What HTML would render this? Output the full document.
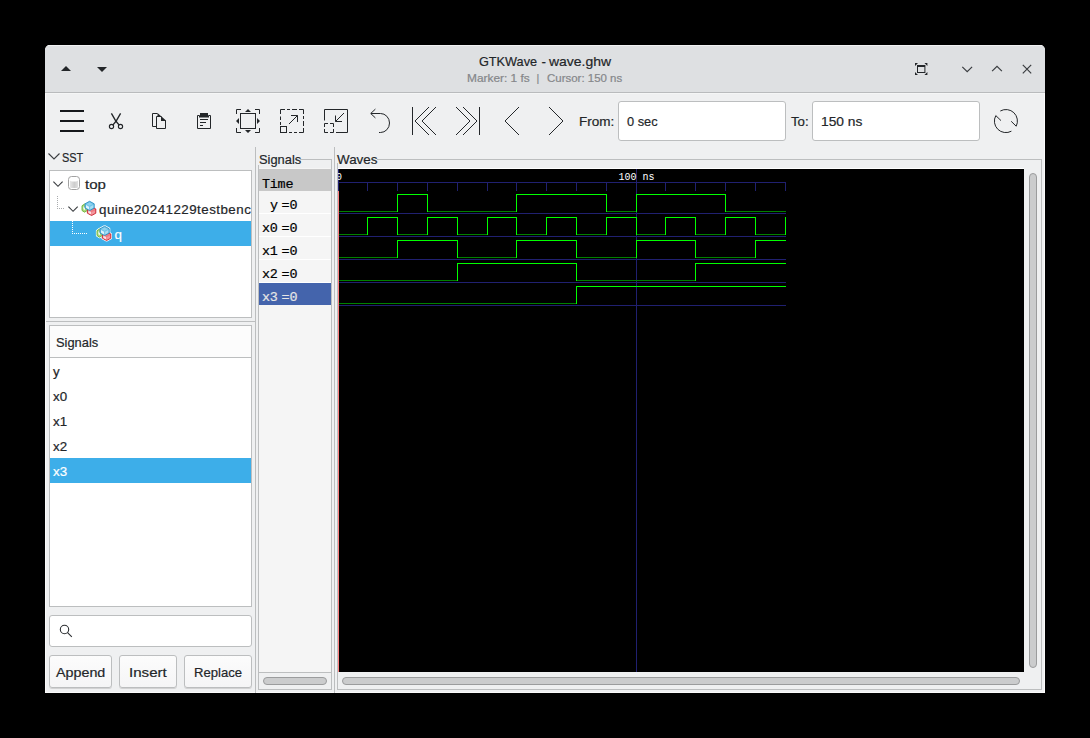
<!DOCTYPE html>
<html><head><meta charset="utf-8">
<style>
*{box-sizing:border-box;margin:0;padding:0}
html,body{width:1090px;height:738px;background:#000;overflow:hidden}
body{position:relative;font-family:"Liberation Sans",sans-serif;font-size:13.33px;color:#232629}
.a{position:absolute}
.t{-webkit-text-stroke:.2px;position:absolute;white-space:nowrap;line-height:25px;height:25px}
.mono{font-family:"Liberation Mono",monospace}
svg{position:absolute;overflow:visible}
#win{left:45px;top:45px;width:1000px;height:648px;background:#eff0f1;border-radius:5px 5px 0 0;overflow:hidden}
#tb{left:0;top:0;width:1000px;height:47px;background:#dee0e2;border-top:1px solid #f1f2f3}
#tbl{left:0;top:47px;width:1000px;height:1px;background:#b9bbbd}
.box{position:absolute;background:#fff;border:1px solid #bcbebf}
.entry{position:absolute;background:#fff;border:1px solid #bcbebf;border-radius:3px}
.btn{position:absolute;border:1px solid #bcbebf;border-radius:3px;background:linear-gradient(#fcfcfc,#f5f5f6);box-shadow:0 1px 0 rgba(0,0,0,.12)}
.sel{position:absolute;background:#3daee9}
.ln{position:absolute;background:#bcbebf}
.sb{position:absolute;background:#cbcccd;border:1px solid #9b9c9d;border-radius:4px}
#wv i{position:absolute;display:block}
.sn{font-size:13.4px;letter-spacing:-.24px;line-height:20px;height:20px;color:#000}
.sx{transform-origin:0 0}
.sub{font-size:10.67px;color:#85878a}
</style></head><body>
<div id="win" class="a">
<div class="a" style="left:0;top:48px;width:1000px;height:600px;box-shadow:inset 1px 0 #fafafa,inset -1px 0 #fafafa,inset 0 -1px #fafafa,inset 0 1px #f5f6f6"></div>
<div id="tb" class="a"></div><div id="tbl" class="a"></div>
</div>

<!-- TITLE -->
<div class="t sx" id="t1" style="left:478.75px;top:49px;transform:scaleX(.952)">GTKWave</div>
<div class="t sx" id="t2" style="left:541.4px;top:49px">-</div>
<div class="t sx" id="t3" style="left:548.6px;top:49px;transform:scaleX(1.047)">wave.ghw</div>
<div class="t sx sub" id="s1" style="left:466.8px;top:66px;transform:scaleX(1.115)">Marker: 1 fs</div>
<div class="t sx sub" id="s2" style="left:536.4px;top:66px">|</div>
<div class="t sx sub" id="s3" style="left:546.9px;top:66px;transform:scaleX(1.076)">Cursor: 150 ns</div>

<!-- LEFT PANEL -->
<div class="t" id="sst" style="left:61.7px;top:145px;transform:scaleX(0.82);transform-origin:0 0">SST</div>
<div class="box" style="left:49px;top:170px;width:203px;height:148px"></div>
<div class="sel" style="left:50px;top:221px;width:201px;height:25px"></div>
<div class="t" id="ttop" style="left:84.5px;top:172px;transform:scaleX(1.128);transform-origin:0 0">top</div>
<div class="t" id="tquine" style="letter-spacing:.475px;left:99px;top:197px;width:152px;overflow:hidden">quine20241229testbench</div>
<div class="t" id="tq" style="left:114.6px;top:222px;transform:scaleX(1);transform-origin:0 0;color:#fff">q</div>

<div class="ln" style="left:46px;top:321px;width:209px;height:1px"></div>
<div class="box" style="left:49px;top:325px;width:203px;height:282px"></div>
<div class="a" style="left:50px;top:326px;width:201px;height:31px;background:#fcfcfc"></div>
<div class="ln" style="left:50px;top:357px;width:201px;height:1px"></div>
<div class="t" id="lsig" style="left:56.3px;top:330px;transform:scaleX(.965);transform-origin:0 0">Signals</div>
<div class="sel" style="left:50px;top:458px;width:201px;height:25px"></div>
<div class="t" style="left:53px;top:359px">y</div>
<div class="t" style="left:53px;top:384px">x0</div>
<div class="t" style="left:53px;top:409px">x1</div>
<div class="t" style="left:53px;top:434px">x2</div>
<div class="t" style="left:53px;top:459px;color:#fff">x3</div>

<div class="entry" style="left:49px;top:615px;width:203px;height:32px"></div>
<div class="btn" style="left:49px;top:655px;width:63px;height:33px"></div>
<div class="btn" style="left:119px;top:655px;width:58px;height:33px"></div>
<div class="btn" style="left:184px;top:655px;width:68px;height:33px"></div>
<div class="t" id="bapp" style="left:56.2px;top:660px;transform:scaleX(1.073);transform-origin:0 0">Append</div>
<div class="t" id="bins" style="left:129.1px;top:660px;transform:scaleX(1.133);transform-origin:0 0">Insert</div>
<div class="t" id="brep" style="left:194.2px;top:660px;transform:scaleX(0.983);transform-origin:0 0">Replace</div>

<!-- pane separators -->
<div class="ln" style="left:255px;top:147px;width:1px;height:546px"></div>
<div class="ln" style="left:334px;top:147px;width:1px;height:546px"></div>

<!-- SIGNALS FRAME -->
<div class="ln" style="left:300px;top:159px;width:32px;height:1px"></div>
<div class="ln" style="left:331px;top:159px;width:1px;height:531px"></div>
<div class="ln" style="left:258px;top:689px;width:74px;height:1px"></div>
<div class="ln" style="left:258px;top:165px;width:1px;height:525px"></div>
<div class="t" id="fsig" style="left:258.5px;top:146px;transform:translateY(.5px) scaleX(.965);transform-origin:0 0">Signals</div>
<div class="a" style="left:259px;top:168px;width:72px;height:504px;background:#f5f5f5"></div>
<div class="a" style="left:259px;top:169px;width:72px;height:22px;background:#c8c8c8"></div>
<div class="ln" style="left:259px;top:672px;width:72px;height:1px"></div>
<div class="sb" style="left:263px;top:677px;width:64px;height:8px"></div>

<!-- WAVES FRAME -->
<div class="ln" style="left:377px;top:159px;width:665px;height:1px"></div>
<div class="ln" style="left:1041px;top:159px;width:1px;height:531px"></div>
<div class="ln" style="left:337px;top:689px;width:705px;height:1px"></div>
<div class="ln" style="left:337px;top:163px;width:1px;height:527px"></div>
<div class="t" id="fwav" style="left:337px;top:146px;transform:translateY(.5px) scaleX(1.005);transform-origin:0 0">Waves</div>
<div class="a" style="left:338px;top:168px;width:686px;height:1px;background:#fff"></div>
<div class="a" id="wave" style="left:338px;top:169px;width:686px;height:503px;background:#000"></div>
<div class="sb" style="left:1029px;top:173px;width:8px;height:495px"></div>
<div class="sb" style="left:342px;top:677px;width:678px;height:8px"></div>

<!-- TOOLBAR ENTRIES -->
<div class="t" id="lfrom" style="left:579px;top:109px;transform:scaleX(1.015);transform-origin:0 0">From:</div>
<div class="entry" style="left:618px;top:101px;width:168px;height:40px"></div>
<div class="t" id="efrom" style="left:627.2px;top:109px;transform:scaleX(0.962);transform-origin:0 0">0 sec</div>
<div class="t" id="lto" style="left:791.1px;top:109px;transform:scaleX(0.994);transform-origin:0 0">To:</div>
<div class="entry" style="left:812px;top:101px;width:168px;height:40px"></div>
<div class="t" id="eto" style="left:820.7px;top:109px;transform:scaleX(1.033);transform-origin:0 0">150 ns</div>

<!-- SIGNAL NAMES PANE -->
<div class="a" style="left:259px;top:213px;width:72px;height:1px;background:#fff"></div>
<div class="a" style="left:259px;top:236px;width:72px;height:1px;background:#fff"></div>
<div class="a" style="left:259px;top:259px;width:72px;height:1px;background:#fff"></div>
<div class="a" style="left:259px;top:282px;width:72px;height:1px;background:#fff"></div>
<div class="a" style="left:259px;top:283px;width:72px;height:22px;background:#4464ac"></div>
<div class="t mono sn" id="stime" style="left:262px;top:175px">Time</div>
<div class="t mono sn" id="sy" style="left:270px;top:196px">y</div><div class="t mono sn" style="left:281.6px;top:196px">=0</div>
<div class="t mono sn" id="sx0" style="left:262px;top:219px">x0</div><div class="t mono sn" style="left:281.6px;top:219px">=0</div>
<div class="t mono sn" style="left:262px;top:242px">x1</div><div class="t mono sn" style="left:281.6px;top:242px">=0</div>
<div class="t mono sn" style="left:262px;top:265px">x2</div><div class="t mono sn" style="left:281.6px;top:265px">=0</div>
<div class="t mono sn" style="left:262px;top:288px;color:#e6e6e6">x3</div><div class="t mono sn" style="left:281.6px;top:288px;color:#e6e6e6">=0</div>

<!-- WAVEFORMS -->
<div id="wv">
<i style="left:338px;top:182px;width:448px;height:1px;background:#202070"></i>
<i style="left:338px;top:169px;width:1px;height:22px;background:#202070"></i>
<i style="left:367px;top:183px;width:1px;height:8px;background:#202070"></i>
<i style="left:397px;top:183px;width:1px;height:8px;background:#202070"></i>
<i style="left:427px;top:183px;width:1px;height:8px;background:#202070"></i>
<i style="left:457px;top:183px;width:1px;height:8px;background:#202070"></i>
<i style="left:487px;top:183px;width:1px;height:8px;background:#202070"></i>
<i style="left:516px;top:183px;width:1px;height:8px;background:#202070"></i>
<i style="left:546px;top:183px;width:1px;height:8px;background:#202070"></i>
<i style="left:576px;top:183px;width:1px;height:8px;background:#202070"></i>
<i style="left:606px;top:183px;width:1px;height:8px;background:#202070"></i>
<i style="left:636px;top:183px;width:1px;height:8px;background:#202070"></i>
<i style="left:665px;top:183px;width:1px;height:8px;background:#202070"></i>
<i style="left:695px;top:183px;width:1px;height:8px;background:#202070"></i>
<i style="left:725px;top:183px;width:1px;height:8px;background:#202070"></i>
<i style="left:755px;top:183px;width:1px;height:8px;background:#202070"></i>
<i style="left:785px;top:183px;width:1px;height:8px;background:#202070"></i>
<i style="left:339px;top:213px;width:447px;height:1px;background:#202070"></i>
<i style="left:339px;top:236px;width:447px;height:1px;background:#202070"></i>
<i style="left:339px;top:259px;width:447px;height:1px;background:#202070"></i>
<i style="left:339px;top:282px;width:447px;height:1px;background:#202070"></i>
<i style="left:339px;top:305px;width:447px;height:1px;background:#202070"></i>
<i style="left:636px;top:169px;width:1px;height:503px;background:#202070"></i>
<i style="left:338px;top:191px;width:1px;height:481px;background:#ff8080"></i>
<i style="left:339px;top:211px;width:59px;height:1px;background:#008000"></i>
<i style="left:397px;top:194px;width:31px;height:1px;background:#00ff00"></i>
<i style="left:397px;top:194px;width:1px;height:18px;background:#00ff00"></i>
<i style="left:427px;top:211px;width:90px;height:1px;background:#008000"></i>
<i style="left:427px;top:194px;width:1px;height:18px;background:#00ff00"></i>
<i style="left:516px;top:194px;width:91px;height:1px;background:#00ff00"></i>
<i style="left:516px;top:194px;width:1px;height:18px;background:#00ff00"></i>
<i style="left:606px;top:211px;width:31px;height:1px;background:#008000"></i>
<i style="left:606px;top:194px;width:1px;height:18px;background:#00ff00"></i>
<i style="left:636px;top:194px;width:90px;height:1px;background:#00ff00"></i>
<i style="left:636px;top:194px;width:1px;height:18px;background:#00ff00"></i>
<i style="left:725px;top:211px;width:61px;height:1px;background:#008000"></i>
<i style="left:725px;top:194px;width:1px;height:18px;background:#00ff00"></i>
<i style="left:339px;top:234px;width:29px;height:1px;background:#008000"></i>
<i style="left:367px;top:217px;width:31px;height:1px;background:#00ff00"></i>
<i style="left:367px;top:217px;width:1px;height:18px;background:#00ff00"></i>
<i style="left:397px;top:234px;width:31px;height:1px;background:#008000"></i>
<i style="left:397px;top:217px;width:1px;height:18px;background:#00ff00"></i>
<i style="left:427px;top:217px;width:31px;height:1px;background:#00ff00"></i>
<i style="left:427px;top:217px;width:1px;height:18px;background:#00ff00"></i>
<i style="left:457px;top:234px;width:31px;height:1px;background:#008000"></i>
<i style="left:457px;top:217px;width:1px;height:18px;background:#00ff00"></i>
<i style="left:487px;top:217px;width:30px;height:1px;background:#00ff00"></i>
<i style="left:487px;top:217px;width:1px;height:18px;background:#00ff00"></i>
<i style="left:516px;top:234px;width:31px;height:1px;background:#008000"></i>
<i style="left:516px;top:217px;width:1px;height:18px;background:#00ff00"></i>
<i style="left:546px;top:217px;width:31px;height:1px;background:#00ff00"></i>
<i style="left:546px;top:217px;width:1px;height:18px;background:#00ff00"></i>
<i style="left:576px;top:234px;width:31px;height:1px;background:#008000"></i>
<i style="left:576px;top:217px;width:1px;height:18px;background:#00ff00"></i>
<i style="left:606px;top:217px;width:31px;height:1px;background:#00ff00"></i>
<i style="left:606px;top:217px;width:1px;height:18px;background:#00ff00"></i>
<i style="left:636px;top:234px;width:30px;height:1px;background:#008000"></i>
<i style="left:636px;top:217px;width:1px;height:18px;background:#00ff00"></i>
<i style="left:665px;top:217px;width:31px;height:1px;background:#00ff00"></i>
<i style="left:665px;top:217px;width:1px;height:18px;background:#00ff00"></i>
<i style="left:695px;top:234px;width:31px;height:1px;background:#008000"></i>
<i style="left:695px;top:217px;width:1px;height:18px;background:#00ff00"></i>
<i style="left:725px;top:217px;width:31px;height:1px;background:#00ff00"></i>
<i style="left:725px;top:217px;width:1px;height:18px;background:#00ff00"></i>
<i style="left:755px;top:234px;width:31px;height:1px;background:#008000"></i>
<i style="left:755px;top:217px;width:1px;height:18px;background:#00ff00"></i>
<i style="left:785px;top:217px;width:1px;height:18px;background:#00ff00"></i>
<i style="left:339px;top:257px;width:59px;height:1px;background:#008000"></i>
<i style="left:397px;top:240px;width:61px;height:1px;background:#00ff00"></i>
<i style="left:397px;top:240px;width:1px;height:18px;background:#00ff00"></i>
<i style="left:457px;top:257px;width:60px;height:1px;background:#008000"></i>
<i style="left:457px;top:240px;width:1px;height:18px;background:#00ff00"></i>
<i style="left:516px;top:240px;width:61px;height:1px;background:#00ff00"></i>
<i style="left:516px;top:240px;width:1px;height:18px;background:#00ff00"></i>
<i style="left:576px;top:257px;width:61px;height:1px;background:#008000"></i>
<i style="left:576px;top:240px;width:1px;height:18px;background:#00ff00"></i>
<i style="left:636px;top:240px;width:60px;height:1px;background:#00ff00"></i>
<i style="left:636px;top:240px;width:1px;height:18px;background:#00ff00"></i>
<i style="left:695px;top:257px;width:61px;height:1px;background:#008000"></i>
<i style="left:695px;top:240px;width:1px;height:18px;background:#00ff00"></i>
<i style="left:755px;top:240px;width:31px;height:1px;background:#00ff00"></i>
<i style="left:755px;top:240px;width:1px;height:18px;background:#00ff00"></i>
<i style="left:339px;top:280px;width:119px;height:1px;background:#008000"></i>
<i style="left:457px;top:263px;width:120px;height:1px;background:#00ff00"></i>
<i style="left:457px;top:263px;width:1px;height:18px;background:#00ff00"></i>
<i style="left:576px;top:280px;width:120px;height:1px;background:#008000"></i>
<i style="left:576px;top:263px;width:1px;height:18px;background:#00ff00"></i>
<i style="left:695px;top:263px;width:91px;height:1px;background:#00ff00"></i>
<i style="left:695px;top:263px;width:1px;height:18px;background:#00ff00"></i>
<i style="left:339px;top:303px;width:238px;height:1px;background:#008000"></i>
<i style="left:576px;top:286px;width:210px;height:1px;background:#00ff00"></i>
<i style="left:576px;top:286px;width:1px;height:18px;background:#00ff00"></i>
</div>
<div class="t mono" id="t0" style="-webkit-text-stroke:0;left:338px;top:171.3px;transform:scaleY(1.08);transform-origin:0 100%;width:4px;overflow:hidden;color:#fff;font-size:10px;line-height:13px;height:13px"><span style="margin-left:-2px">0</span></div>
<div class="t mono" id="t100" style="-webkit-text-stroke:0;left:618.4px;top:171.3px;transform:scaleY(1.08);transform-origin:0 100%;color:#fff;font-size:10px;line-height:13px;height:13px">100 ns</div>
<!-- ICONS -->
<svg id="ico" width="1090" height="738" viewBox="0 0 1090 738" style="left:0;top:0" fill="none" stroke="#232629" stroke-width="1">
<!-- titlebar left triangles -->
<path d="M61 71 L66 66 L71 71 Z" fill="#232629" stroke="none"/>
<path d="M97 67 L107 67 L102 72 Z" fill="#232629" stroke="none"/>
<!-- titlebar right -->
<g id="fs" stroke="none" fill="#232629">
<path d="M917 65 h8.4 v8 h-8.4 Z M918 67 v5 h6.4 v-5 Z" fill-rule="evenodd"/>
<path d="M915 63 h3 l-3 3 Z M927.4 63 h-3 l3 3 Z M915 75 h3 l-3 -3 Z M927.4 75 h-3 l3 -3 Z"/>
</g>
<path d="M962.3 66.8 L967.2 71.7 L972.1 66.8" stroke="#3a3d40" stroke-width="1.2"/>
<path d="M992.1 71.2 L997 66.3 L1001.9 71.2" stroke="#3a3d40" stroke-width="1.2"/>
<path d="M1022.8 64.9 L1031.2 73.3 M1031.2 64.9 L1022.8 73.3" stroke="#3a3d40" stroke-width="1.2"/>
<!-- hamburger -->
<path d="M60 110 h24 v2 h-24 Z M60 120 h24 v2 h-24 Z M60 130 h24 v2 h-24 Z" fill="#16191c" stroke="none"/>
<!-- cut -->
<g>
<circle cx="111.5" cy="126.5" r="2.1" stroke-width="1.15"/><circle cx="120.5" cy="126.5" r="2.1" stroke-width="1.15"/>
<path d="M111.4 113.4 L116 121.3 L119 124.9 M120.6 113.4 L116 121.3 L113 124.9" stroke-width="1.35" stroke-linejoin="round"/>
</g>
<!-- copy -->
<g>
<path d="M156.5 126.5 H152.5 V113.5 H157.5"/>
<path d="M161.5 116.5 H156.5 V128.5 H165.5 V120.5"/>
<path d="M157.5 113 L166 120.5 V121 H161 V117 H157.5 Z" fill="#232629" stroke="none"/>
</g>
<!-- paste -->
<g>
<path d="M199.5 115.5 H197.5 V128.5 H210.5 V115.5 H208.5"/>
<path d="M200 113 h8 v2.5 h1 v2 h-10 v-2 h1 Z" fill="#232629" stroke="none"/>
<path d="M200 119.5 H208 M200 122.5 H206 M200 125.5 H203"/>
</g>
<!-- zoom fit -->
<g>
<rect x="240.5" y="113.5" width="15" height="15"/>
<path d="M236.5 114 V109.5 H241 M255 109.5 H259.5 V114 M259.5 128 V132.5 H255 M241 132.5 H236.5 V128"/>
<path d="M245 112 L248 109 L251 112 Z M245 130 L248 133 L251 130 Z M239 118 L236 121 L239 124 Z M257 118 L260 121 L257 124 Z" fill="#232629" stroke="none"/>
</g>
<!-- zoom in (dashed) -->
<g>
<path d="M280.5 125 V122 M280.5 120 V116.5 M280.5 114 V109.5 H285 M287 109.5 H290 M292 109.5 H297 M299 109.5 H303.5 V114 M303.5 116 V119 M303.5 121 V126 M303.5 128 V132.5 H299 M297 132.5 H294 M292 132.5 H289"/>
<rect x="280.5" y="126.5" width="6" height="6"/>
<path d="M289 124 L297.5 115.5 M291 115.5 H297.5 V122"/>
</g>
<!-- zoom out -->
<g>
<path d="M324.5 120.5 V109.5 H347.5 V132.5 H336"/>
<path d="M324.5 127 V123.5 H328 M330 123.5 H333.5 V127 M333.5 129 V132.5 H330 M328 132.5 H324.5 V129"/>
<path d="M344 113 L335.5 121.5 M335.5 115.5 V121.5 H342"/>
</g>
<!-- undo -->
<g>
<path d="M375.4 109.1 L370.7 113.5 L375.4 117.9 M371 113.5 H380.5 A9 9.5 0 0 1 380.5 132.5 H379"/>
</g>
<!-- first / last -->
<g>
<path d="M412.5 107 V135 M429 107 L415 121 L429 135 M436 107 L422 121 L436 135"/>
<path d="M479.5 107 V135 M463 107 L477 121 L463 135 M456 107 L470 121 L456 135"/>
</g>
<!-- prev / next -->
<path d="M519 107 L505 121 L519 135 M549 107 L563 121 L549 135"/>
<!-- reload -->
<g>
<path d="M1000.3 111 A11.5 11.5 0 0 1 1016.2 126.2 L1011.2 121.3"/>
<path d="M1011.4 131.2 A11.5 11.5 0 0 1 995.8 115.6 L1001 120.6"/>
</g>
<!-- SST expander + tree chevrons -->
<path d="M48.5 153.5 L54 159 L59.5 153.5" stroke="#3a3d40" stroke-width="1.1"/>
<path d="M53.4 181.7 L58 186.3 L62.6 181.7" stroke="#3a3d40" stroke-width="1.15"/>
<path d="M68.4 206.6 L73.05 211.3 L77.7 206.6" stroke="#3a3d40" stroke-width="1.15"/>
<!-- tree dotted lines -->
<path d="M57.5 196 V207 M57 208.5 H64" stroke="#aaacae" stroke-dasharray="1 1"/>
<path d="M72.5 221 V232 M72 233.5 H87" stroke="#fff" stroke-dasharray="1 1"/>
<!-- cylinder -->
<defs><linearGradient id="cg" x1="0" x2="1"><stop offset="0" stop-color="#e6e6e6"/><stop offset=".55" stop-color="#cdcdcd"/><stop offset="1" stop-color="#e0e0e0"/></linearGradient></defs>
<rect x="68.5" y="176.5" width="11" height="13" rx="3" fill="#fff" stroke="#a2a2a2"/>
<rect x="70" y="180" width="8" height="8" rx="1" fill="url(#cg)" stroke="none"/>
<ellipse cx="74" cy="180" rx="4" ry="1.6" fill="#fff" stroke="none"/>
<!-- cubes -->
<g id="cubes" stroke-width=".9" stroke-linejoin="round">
<path d="M84.5 204 L87.6 205.8 V210.3 L84.5 212.2 L82 210.5 V205.8 Z" fill="#a6d77a" stroke="#6cb33a"/>
<path d="M83.3 206.2 L85 207.2 V210.2 L83.3 209.2 Z" fill="#f1fae8" stroke="none"/>
<path d="M91.6 206.8 L95.8 209 V213.2 L91.6 215.5 L87.4 213.2 V209 Z" fill="#ee7a82" stroke="#c9222f"/>
<path d="M88.3 210.6 L91.2 212.1 V214.6 L88.3 213 Z" fill="#fde3e4" stroke="none"/>
<path d="M92 212.1 L94.9 210.6 V213 L92 214.6 Z" fill="#f39aa0" stroke="none"/>
<path d="M89.6 201.3 L94.2 203.8 V208 L89.6 210.6 L85 208 V203.8 Z" fill="#6fc3e8" stroke="#2c90c2"/>
<path d="M86 205 L89.1 206.7 V209.6 L86 207.8 Z" fill="#dcf3fc" stroke="none"/>
<path d="M90.1 206.7 L93.3 205 V207.8 L90.1 209.6 Z" fill="#a9def4" stroke="none"/>
<path d="M89.6 202.4 L92.8 204.1 L89.6 205.8 L86.4 204.1 Z" fill="#8ed1ee" stroke="none"/>
</g>
<g id="sil" transform="translate(15 25)" fill="#fff" stroke="#fff" stroke-width="2.2" stroke-linejoin="round"><path d="M84.5 204 L87.6 205.8 V210.3 L84.5 212.2 L82 210.5 V205.8 Z"/><path d="M91.6 206.8 L95.8 209 V213.2 L91.6 215.5 L87.4 213.2 V209 Z"/><path d="M89.6 201.3 L94.2 203.8 V208 L89.6 210.6 L85 208 V203.8 Z"/></g>
<use href="#cubes" x="15" y="25"/>
<!-- search -->
<circle cx="64.5" cy="629.5" r="4.2" stroke="#2a2d30" stroke-width="1.1"/><path d="M67.6 632.7 L71.8 636.9" stroke="#2a2d30" stroke-width="1.1"/>
</svg>

</body></html>
